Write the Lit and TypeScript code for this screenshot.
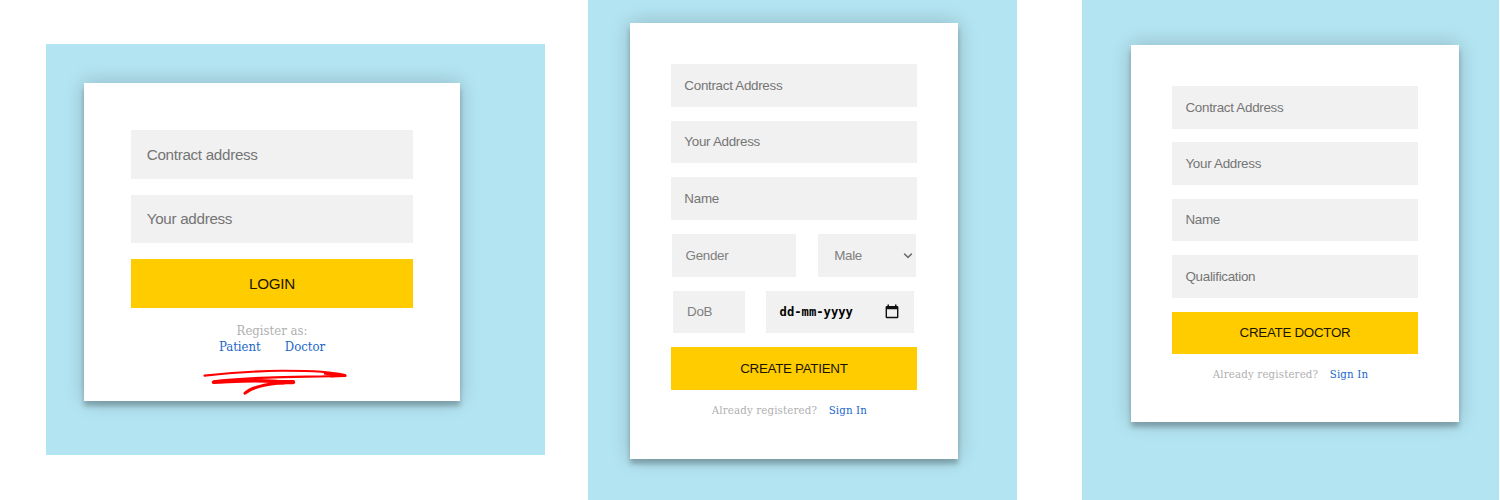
import { LitElement, html, css } from "lit";
import { customElement } from "lit/decorators.js";

@customElement("app-root")
export class AppRoot extends LitElement {
  static styles = css`
    :host { display: block; width: 1500px; height: 500px; overflow: hidden; background: #fff; font-family: "Liberation Sans", Arial, sans-serif; }
    * { box-sizing: border-box; }
    .page { display: flex; align-items: flex-start; height: 500px; padding-left: 45.6px; }
    .panel { flex: none; background: #b3e4f1; }
    .panel.login { width: 499.4px; height: 411px; margin-top: 43.8px; padding: 39.6px 0 0 38.4px; }
    .panel.patient { width: 429px; height: 499.5px; margin-left: 43px; padding: 23.2px 0 0 41.7px; }
    .panel.doctor { width: 417.3px; height: 499.5px; margin-left: 65px; padding: 45px 0 0 48.8px; }
    .card { display: flex; flex-direction: column; background: #fff; box-shadow: 0 0 19px rgba(0,0,0,.2), 0 5px 5px rgba(0,0,0,.24); font-size: 13.4px; letter-spacing: -.3px; width: 328.4px; padding: 41px 41px 0; gap: 14px; }
    .login .card { width: 376px; height: 317.6px; padding: 46.8px 47px 0; gap: 15.9px; font-size: 15.2px; letter-spacing: -.3px; }
    .patient .card { height: 435.6px; }
    .doctor .card { height: 377.2px; gap: 13.8px; }
    .field { display: flex; align-items: center; height: 42.6px; padding: 0 13.7px .4px; background: #f1f1f1; color: #757575; white-space: nowrap; }
    .login .field { height: 48.6px; padding: 0 15.8px; }
    .button { display: flex; align-items: center; justify-content: center; height: 42.6px; padding-bottom: .4px; background: #fc0; color: #1c1600; }
    .login .button { height: 48.4px; padding: 0; }
    .row { display: flex; }
    .row .field { color: #808080; }
    .gender { width: 124px; margin: 0 21.8px 0 1.2px; }
    .select { width: 98.6px; justify-content: space-between; }
    .row .select { padding: 0 3.5px 0 16.5px; }
    .dob { width: 71.5px; margin: 0 21px 0 2.7px; }
    .date { width: 148.5px; justify-content: space-between; }
    .row .date { color: #000; font: bold 12.2px "DejaVu Sans Mono", monospace; letter-spacing: 0; padding: 0 15px 0 13.7px; }
    .note { display: flex; justify-content: center; gap: 11.5px; margin-top: -1px; padding-right: 9px; font: 11.4px/15px "DejaVu Serif", serif; font-stretch: condensed; letter-spacing: .15px; color: #b0b0b0; white-space: nowrap; }
    .link { color: #1b67c9; }
    .signup { display: flex; flex-direction: column; align-items: center; font: 13px/16px "DejaVu Serif", serif; font-stretch: condensed; letter-spacing: 0; color: #b0b0b0; }
    .links { display: flex; gap: 24px; }
    .mark { width: 148px; height: 28px; margin: 13px 0 0 4px; overflow: visible; }
    svg { display: block; flex: none; }
  `;

  private note() {
    return html`<div class="note"><span>Already registered?</span><span class="link">Sign In</span></div>`;
  }

  render() {
    return html`
      <div class="page">
        <section class="panel login"><div class="card">
          <div class="field">Contract address</div>
          <div class="field">Your address</div>
          <div class="button">LOGIN</div>
          <div class="signup">
            <span>Register as:</span>
            <div class="links"><span class="link">Patient</span><span class="link">Doctor</span></div>
            <svg class="mark" viewBox="200 368 148 28" fill="none" stroke="#f00" stroke-linecap="round" stroke-linejoin="round">
              <path d="M204.5 375.6C235 372.5 257 370.8 281 370.8C306 370.7 333 372 345 375" stroke-width="2.1"/>
              <path d="M345 375.5C328 376.8 293 376.4 268 377.6C246 378.3 227 379.4 214 381.4" stroke-width="2.2"/>
              <path d="M325 373.6L345.5 375.7L331 376.2" stroke-width="2.4"/>
              <path d="M213.5 382.2C233 381.6 252 379.5 277 381.6L293 382" stroke-width="3.6"/>
              <path d="M278 382.2H293" stroke-width="4.2"/>
              <path d="M284 383C265 383.5 251 388 245 393.2" stroke-width="3"/>
            </svg>
          </div>
        </div></section>
        <section class="panel patient"><div class="card">
          <div class="field">Contract Address</div>
          <div class="field">Your Address</div>
          <div class="field">Name</div>
          <div class="row">
            <div class="field gender">Gender</div>
            <div class="field select"><span>Male</span>
              <svg width="10" height="8" viewBox="0 0 10 8" fill="none" stroke="#707070" stroke-width="1.5"><path d="M1.2 2.6L5 6.4L8.8 2.6"/></svg>
            </div>
          </div>
          <div class="row">
            <div class="field dob">DoB</div>
            <div class="field date"><span>dd-mm-yyyy</span>
              <svg width="14" height="15" viewBox="0 0 14 15"><path fill="#111" fill-rule="evenodd" d="M2.5.5H4V2H10V.5H11.5V2H12.2Q13.4 2 13.4 3.2V13Q13.4 14.2 12.2 14.2H1.8Q.6 14.2.6 13V3.2Q.6 2 1.8 2H2.5ZM2 5.2V12.8H12V5.2Z"/></svg>
            </div>
          </div>
          <div class="button">CREATE PATIENT</div>
          ${this.note()}
        </div></section>
        <section class="panel doctor"><div class="card">
          <div class="field">Contract Address</div>
          <div class="field">Your Address</div>
          <div class="field">Name</div>
          <div class="field">Qualification</div>
          <div class="button">CREATE DOCTOR</div>
          ${this.note()}
        </div></section>
      </div>`;
  }
}
